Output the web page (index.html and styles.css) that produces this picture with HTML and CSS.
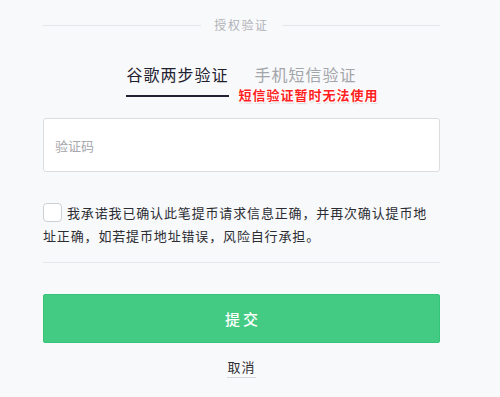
FILE: index.html
```html
<!DOCTYPE html>
<html lang="zh">
<head>
<meta charset="utf-8">
<link rel="stylesheet" href="styles.css">
</head>
<body>
<div class="panel">
  <div class="title"><span class="rule"></span><span class="title-text">授权验证</span><span class="rule"></span></div>
  <div class="tabs">
    <div class="tab active">谷歌两步验证</div>
    <div class="tab">手机短信验证<span class="notice">短信验证暂时无法使用</span></div>
  </div>
  <input class="code" type="text" placeholder="验证码">
  <label class="agree">
    <span class="box"></span>我承诺我已确认此笔提币请求信息正确，并再次确认提币地址正确，如若提币地址错误，风险自行承担。
  </label>
  <div class="divider"></div>
  <button class="submit">提交</button>
  <div class="cancel-row"><span class="cancel">取消</span></div>
</div>
</body>
</html>
```
FILE: styles.css
```css
html, body {
  margin: 0;
  padding: 0;
  background: #f8f9fb;
}
body {
  font-family: "Noto Sans CJK SC", "Noto Sans", sans-serif;
  color: #2c2d33;
}
.panel {
  width: 397px;
  margin-left: 43px;
  display: flex;
  flex-direction: column;
}
.title {
  margin-top: 16px;
  display: flex;
  align-items: center;
  gap: 13px;
  height: 18px;
}
.rule {
  flex: 1;
  height: 1px;
  background: #e4e6ea;
}
.title-text {
  font-size: 12px;
  line-height: 18px;
  letter-spacing: 1.6px;
  color: #b2b3b8;
}
.tabs {
  margin-top: 29px;
  display: flex;
  justify-content: center;
  gap: 26px;
}
.tab {
  position: relative;
  font-size: 16px;
  line-height: 22px;
  letter-spacing: 1px;
  color: #a4a5aa;
  padding-bottom: 10px;
  border-bottom: 2px solid transparent;
}
.tab.active {
  color: #1f2130;
  border-bottom-color: #1f2233;
}
.notice {
  position: absolute;
  left: -16px;
  top: 24px;
  white-space: nowrap;
  font-size: 13px;
  line-height: 16px;
  font-weight: 700;
  letter-spacing: 1px;
  color: #ff1f1f;
  text-shadow: 1px 1px 0 #fff, -1px -1px 0 #fff, 1px -1px 0 #fff, -1px 1px 0 #fff, 1px 2px 1px rgba(0,0,0,0.15);
}
.code {
  margin-top: 21px;
  box-sizing: border-box;
  width: 397px;
  height: 54px;
  border: 1px solid #dcdde0;
  border-radius: 3px;
  background: #fff;
  padding: 0 11px;
  font-family: "Noto Sans CJK SC", sans-serif;
  font-size: 13px;
  outline: none;
}
.code::placeholder {
  color: #a7a8ad;
}
.agree {
  margin-top: 29px;
  font-size: 13px;
  line-height: 23px;
  letter-spacing: 0.85px;
  color: #2c2d33;
}
.box {
  display: inline-block;
  box-sizing: border-box;
  width: 19px;
  height: 19px;
  border: 1px solid #cfd0d4;
  border-radius: 4px;
  background: #fff;
  vertical-align: -4px;
  margin-right: 5px;
}
.divider {
  margin-top: 15px;
  height: 1px;
  background: #e7e8eb;
}
.submit {
  margin-top: 31px;
  height: 49px;
  width: 397px;
  border: 1px solid #36c477;
  border-radius: 2px;
  background: #43cb83;
  color: #fff;
  font-family: "Noto Sans CJK SC", sans-serif;
  font-size: 15px;
  font-weight: 500;
  letter-spacing: 3px;
  padding: 0 0 0 3px;
}
.cancel-row {
  margin-top: 15px;
  display: flex;
  justify-content: center;
}
.cancel {
  font-size: 13px;
  line-height: 18px;
  letter-spacing: 1px;
  color: #2c2d33;
  padding-bottom: 1px;
  border-bottom: 1px solid #d6d7db;
}
```
